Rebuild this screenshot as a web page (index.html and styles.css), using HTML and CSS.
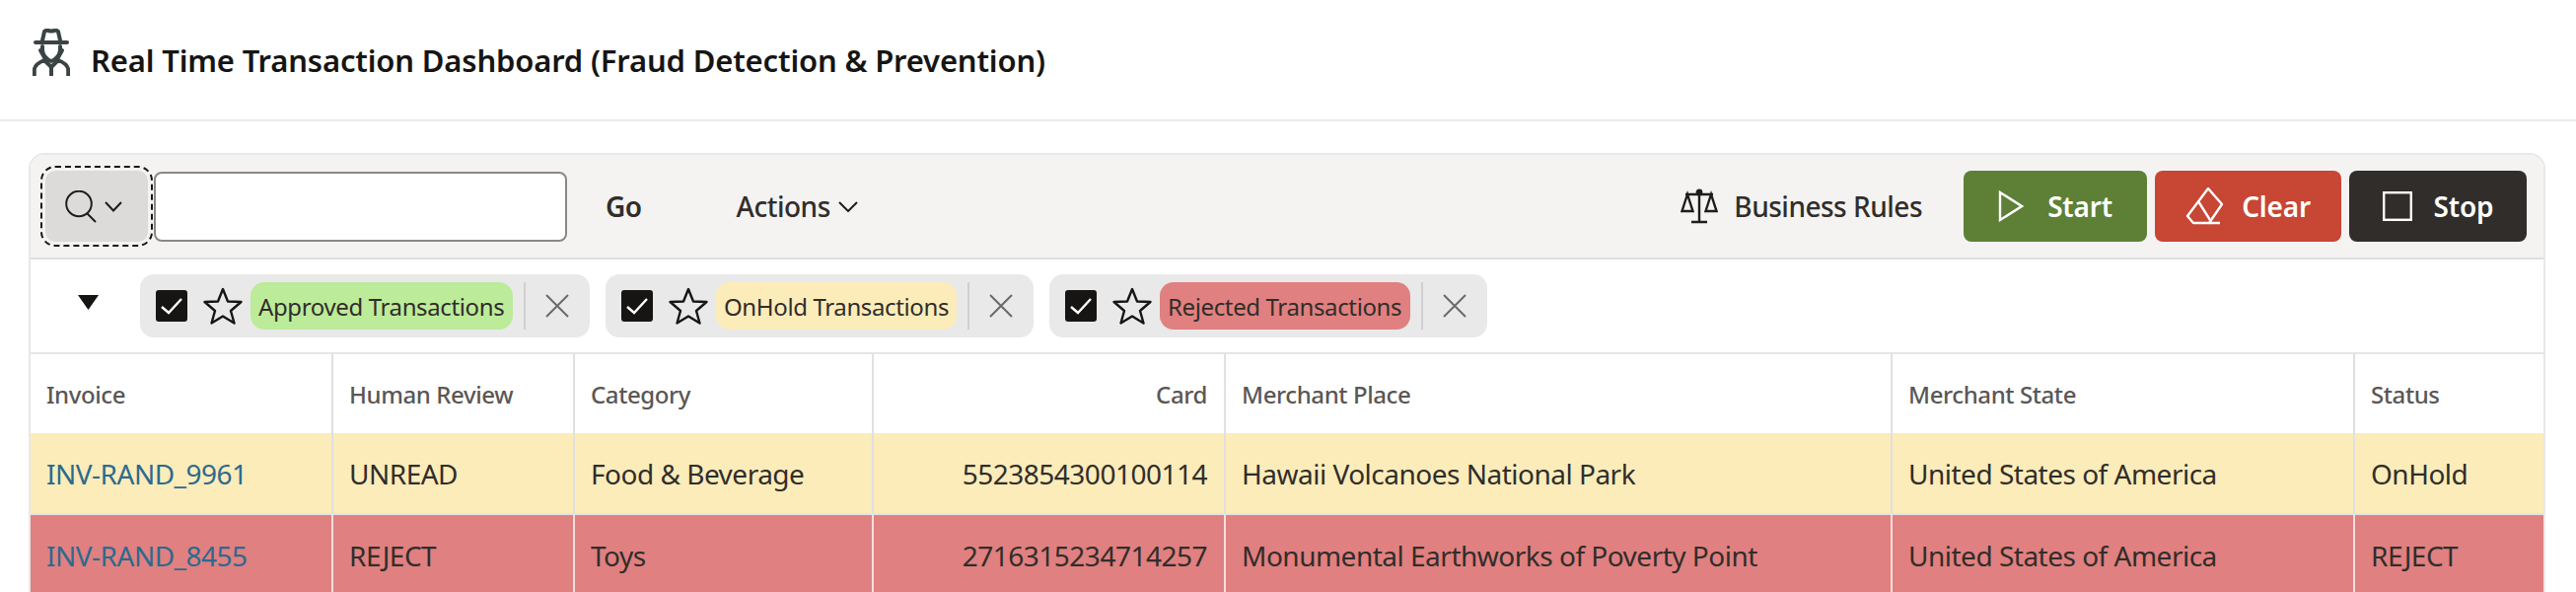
FILE: index.html
```html
<!DOCTYPE html>
<html lang="en">
<head>
<meta charset="utf-8">
<title>Real Time Transaction Dashboard</title>
<link rel="stylesheet" href="styles.css">
</head>
<body>
<header class="page-header">
  <svg class="spy-icon" viewBox="0 0 38 48" width="38" height="48" fill="none" stroke="#3b4444" stroke-width="4" stroke-linecap="round" stroke-linejoin="round">
    <path d="M10 12 L12 3 Q14 1 16 2 Q19 3 22 2 Q24 1 26 3 L28 12"/>
    <path d="M3 14 H35"/>
    <path d="M10 18 V22 Q11 30 19 33 Q27 30 28 22 V18"/>
    <path d="M8 22 L13 31 M30 22 L25 31"/>
    <path d="M1.800 47 V42 Q2 36 12 32 L19 39 L26 32 Q36 36 36.200 42 V47"/>
    <path d="M19 39 V47"/>
  </svg>
  <h1 class="page-title">Real Time Transaction Dashboard (Fraud Detection &amp; Prevention)</h1>
</header>
<main class="panel">
  <div class="toolbar">
    <button class="search-btn" type="button" aria-label="Search">
      <svg viewBox="0 0 32 33" width="32" height="33" fill="none" stroke="#1f1d1b" stroke-width="2"><circle cx="14" cy="13.500" r="12.800"/><path d="M22 23 L31 32"/></svg>
      <svg viewBox="0 0 18 11" width="18" height="11" fill="none" stroke="#1f1d1b" stroke-width="2"><path d="M1 1 L9 9.500 L17 1"/></svg>
    </button>
    <input class="search-input" type="text" aria-label="Search">
    <span class="go">Go</span>
    <span class="actions">Actions
      <svg viewBox="0 0 20 11" width="20" height="11" fill="none" stroke="#1f1d1b" stroke-width="2"><path d="M1 1 L10 10 L19 1"/></svg>
    </span>
    <div class="toolbar-right">
      <span class="rules">
        <svg viewBox="0 0 38 36" width="38" height="36" fill="none" stroke="#1f1d1b" stroke-width="2.4"><path d="M19 3 V33 M11 34 H27 M5 6 H33"/><circle cx="19" cy="4" r="2.2"/><path d="M7 6 L1.500 23 H12.500 Z M31 6 L25.500 23 H36.500 Z"/></svg>
        Business Rules
      </span>
      <button class="btn btn-start" type="button">
        <svg viewBox="0 0 26 32" width="26" height="32" fill="none" stroke="#fff" stroke-width="2.4"><path d="M2 2 L24 16 L2 30 Z"/></svg>
        Start
      </button>
      <button class="btn btn-clear" type="button">
        <svg viewBox="0 0 40 38" width="40" height="38" fill="none" stroke="#fff" stroke-width="2.4" stroke-linejoin="round"><path d="M23 1 L37 17 L24 36 H8 L2 29 Z"/><path d="M13 14 L25 33 M24 36 H35"/></svg>
        Clear
      </button>
      <button class="btn btn-stop" type="button">
        <svg viewBox="0 0 30 30" width="30" height="30" fill="none" stroke="#fff" stroke-width="2.4"><rect x="1.200" y="1.200" width="27.600" height="27.600"/></svg>
        Stop
      </button>
    </div>
  </div>
  <div class="filters">
    <svg class="caret" viewBox="0 0 21 15" width="21" height="15"><path d="M0 0 H21 L10.500 15 Z" fill="#161513"/></svg>
    <div class="chip">
      <svg class="check" viewBox="0 0 32 32" width="32" height="32"><rect width="32" height="32" rx="3" fill="#161513"/><path d="M6 17 L13 23 L26 9" fill="none" stroke="#fff" stroke-width="2.4"/></svg>
      <svg class="star" viewBox="0 0 40 38" width="40" height="38"><path d="M20 2 L25 14.500 L38.500 15 L28 24 L31.500 36.500 L20 29.500 L8.500 36.500 L12 24 L1.500 15 L15 14.500 Z" fill="none" stroke="#161513" stroke-width="2.4" stroke-linejoin="round"/></svg>
      <span class="chip-label label-green">Approved Transactions</span>
      <span class="chip-sep"></span>
      <svg class="close" viewBox="0 0 24 24" width="24" height="24"><path d="M1 1 L23 23 M23 1 L1 23" stroke="#6b6a68" stroke-width="2" fill="none"/></svg>
    </div>
    <div class="chip">
      <svg class="check" viewBox="0 0 32 32" width="32" height="32"><rect width="32" height="32" rx="3" fill="#161513"/><path d="M6 17 L13 23 L26 9" fill="none" stroke="#fff" stroke-width="2.4"/></svg>
      <svg class="star" viewBox="0 0 40 38" width="40" height="38"><path d="M20 2 L25 14.500 L38.500 15 L28 24 L31.500 36.500 L20 29.500 L8.500 36.500 L12 24 L1.500 15 L15 14.500 Z" fill="none" stroke="#161513" stroke-width="2.4" stroke-linejoin="round"/></svg>
      <span class="chip-label label-yellow">OnHold Transactions</span>
      <span class="chip-sep"></span>
      <svg class="close" viewBox="0 0 24 24" width="24" height="24"><path d="M1 1 L23 23 M23 1 L1 23" stroke="#6b6a68" stroke-width="2" fill="none"/></svg>
    </div>
    <div class="chip">
      <svg class="check" viewBox="0 0 32 32" width="32" height="32"><rect width="32" height="32" rx="3" fill="#161513"/><path d="M6 17 L13 23 L26 9" fill="none" stroke="#fff" stroke-width="2.4"/></svg>
      <svg class="star" viewBox="0 0 40 38" width="40" height="38"><path d="M20 2 L25 14.500 L38.500 15 L28 24 L31.500 36.500 L20 29.500 L8.500 36.500 L12 24 L1.500 15 L15 14.500 Z" fill="none" stroke="#161513" stroke-width="2.4" stroke-linejoin="round"/></svg>
      <span class="chip-label label-red">Rejected Transactions</span>
      <span class="chip-sep"></span>
      <svg class="close" viewBox="0 0 24 24" width="24" height="24"><path d="M1 1 L23 23 M23 1 L1 23" stroke="#6b6a68" stroke-width="2" fill="none"/></svg>
    </div>
  </div>
  <table class="grid">
    <colgroup>
      <col class="c-invoice"><col class="c-review"><col class="c-category"><col class="c-card"><col class="c-place"><col class="c-state"><col class="c-status">
    </colgroup>
    <thead>
      <tr><th>Invoice</th><th>Human Review</th><th>Category</th><th class="num">Card</th><th>Merchant Place</th><th>Merchant State</th><th>Status</th></tr>
    </thead>
    <tbody>
      <tr class="row-hold"><td><a href="#">INV-RAND_9961</a></td><td>UNREAD</td><td>Food &amp; Beverage</td><td class="num">5523854300100114</td><td>Hawaii Volcanoes National Park</td><td>United States of America</td><td>OnHold</td></tr>
      <tr class="row-reject"><td><a href="#">INV-RAND_8455</a></td><td>REJECT</td><td>Toys</td><td class="num">2716315234714257</td><td>Monumental Earthworks of Poverty Point</td><td>United States of America</td><td>REJECT</td></tr>
    </tbody>
  </table>
</main>
</body>
</html>
```

FILE: styles.css
```css
* { box-sizing: border-box; }
html, body { margin: 0; height: 600px; overflow: hidden; background: #fff; }
body { font-family: "Noto Sans", sans-serif; color: #312d2a; font-size: 28px; letter-spacing: -0.5px; }

.page-header { height: 123px; border-bottom: 2px solid #ebebeb; display: flex; align-items: center; padding-left: 33px; gap: 21px; }
.spy-icon { margin-bottom: 15px; flex: none; }
.page-title { margin: 0; font-size: 31px; font-weight: 600; color: #161513; letter-spacing: -0.17px; }

.panel { height: 445px; overflow: hidden; margin: 32px 31px 0 29px; border: 2px solid #e8e8e8; border-bottom: 0; border-radius: 16px 16px 0 0; }

.toolbar { height: 106px; background: #f4f3f2; border-radius: 14px 14px 0 0; border-bottom: 2px solid #dfdfdf; display: flex; align-items: center; padding: 0 17px 0 15px; }
.search-btn { width: 104px; height: 72px; border: 0; border-radius: 10px; background: #dcdbd9; outline: 2px dashed #161513; outline-offset: 3px; display: flex; align-items: center; justify-content: center; gap: 8px; padding: 0 7px 0 0; }
.search-input { width: 419px; height: 71px; margin-left: 6px; border: 2px solid #8a8886; border-radius: 8px; background: #fff; }
.go { margin-left: 39px; font-weight: 600; }
.actions { margin-left: 96px; font-weight: 500; display: flex; align-items: center; gap: 8px; }
.toolbar-right { margin-left: auto; display: flex; align-items: center; gap: 8px; }
.rules { display: flex; align-items: center; gap: 16px; margin-right: 34px; font-weight: 500; }

.btn { height: 72px; border: 0; border-radius: 8px; color: #fff; font: inherit; font-weight: 600; letter-spacing: -0.2px; display: flex; align-items: center; justify-content: center; padding: 0; }
.btn-start { width: 186px; background: #5d8036; gap: 24px; }
.btn-clear { width: 189px; background: #c74634; gap: 17px; }
.btn-stop { width: 180px; background: #312d2a; gap: 22px; }

.filters { height: 96px; border-bottom: 2px solid #e5e5e5; display: flex; align-items: center; padding-left: 48px; }
.caret { flex: none; margin: 0 42px 8px 0; }
.chip { height: 64px; border-radius: 14px; background: #e9e9e9; display: flex; align-items: center; padding-left: 16px; margin-right: 16px; }
.check { flex: none; margin-right: 16px; }
.star { flex: none; margin-right: 8px; }
.chip-label { height: 48px; border-radius: 14px; padding: 0 8px; display: flex; align-items: center; font-size: 24px; letter-spacing: -0.37px; color: #312d2a; white-space: nowrap; }
.label-green { width: 266px; background: #bceb9a; }
.label-yellow { width: 244px; background: #fbecba; }
.label-red { width: 254px; background: #e08080; }
.chip-sep { width: 2px; height: 48px; margin: 0 20px 0 11px; background: #cfcfcf; }
.close { flex: none; margin-right: 21px; }

.grid { width: 100%; table-layout: fixed; border-collapse: collapse; }
.c-invoice { width: 306px; }
.c-review { width: 245px; }
.c-category { width: 303px; }
.c-card { width: 357px; }
.c-place { width: 676px; }
.c-state { width: 469px; }
.grid th, .grid td { padding: 0 0 0 16px; text-align: left; border-right: 2px solid #e0e0e0; white-space: nowrap; overflow: hidden; }
.grid th:last-child, .grid td:last-child { border-right: 0; }
.grid th { height: 80px; font-size: 24px; font-weight: 500; color: #5a5755; letter-spacing: -0.4px; }
.grid td { height: 82px; }
.grid .num { text-align: right; padding: 0 17px 0 0; }
.row-hold td { background: #fbecba; border-bottom: 2px solid #e4e4e4; }
.row-reject td { background: #e08080; border-right-color: #f3dede; }
.grid a { color: #2c6a8f; text-decoration: none; }
```
